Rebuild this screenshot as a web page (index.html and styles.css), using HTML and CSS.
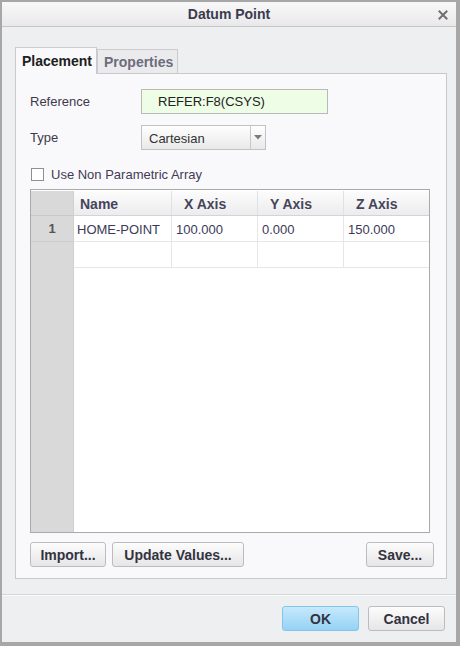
FILE: index.html
```html
<!DOCTYPE html>
<html>
<head>
<meta charset="utf-8">
<link rel="stylesheet" href="styles.css">
</head>
<body>
<div class="window">
  <div class="titlebar">
    <span class="title">Datum Point</span>
    <svg class="close" width="10" height="10" viewBox="0 0 10 10"><path d="M1.5 1.5 L8.5 8.5 M8.5 1.5 L1.5 8.5" stroke="#707070" stroke-width="2" stroke-linecap="square"/></svg>
  </div>
  <div class="body">
    <div class="tabs">
      <div class="tab active">Placement</div>
      <div class="tab">Properties</div>
    </div>
    <div class="panel">
      <div class="row">
        <span class="label">Reference</span>
        <div class="refbox">REFER:F8(CSYS)</div>
      </div>
      <div class="row row-type">
        <span class="label">Type</span>
        <div class="select">
          <span class="select-text">Cartesian</span>
          <span class="select-arrow"><svg width="8" height="5" viewBox="0 0 8 5"><path d="M0 0 H8 L4 4.5 Z" fill="#7b7b7b"/></svg></span>
        </div>
      </div>
      <div class="check-row">
        <span class="checkbox"></span>
        <span class="check-label">Use Non Parametric Array</span>
      </div>
      <div class="table">
        <div class="rowheads">
          <div class="rh rh-head"></div>
          <div class="rh">1</div>
          <div class="rh"></div>
        </div>
        <div class="grid">
          <div class="hrow">
            <div class="hc c-name">Name</div>
            <div class="hc c-x">X Axis</div>
            <div class="hc c-y">Y Axis</div>
            <div class="hc c-z">Z Axis</div>
          </div>
          <div class="drow">
            <div class="dc c-name">HOME-POINT</div>
            <div class="dc c-x">100.000</div>
            <div class="dc c-y">0.000</div>
            <div class="dc c-z">150.000</div>
          </div>
          <div class="drow">
            <div class="dc c-name"></div>
            <div class="dc c-x"></div>
            <div class="dc c-y"></div>
            <div class="dc c-z"></div>
          </div>
        </div>
      </div>
      <div class="btn-row">
        <button class="btn b-import">Import...</button>
        <button class="btn b-update">Update Values...</button>
        <span class="spacer"></span>
        <button class="btn b-save">Save...</button>
      </div>
    </div>
  </div>
  <div class="footer">
    <button class="btn b-ok">OK</button>
    <button class="btn b-cancel">Cancel</button>
  </div>
</div>
</body>
</html>
```
FILE: styles.css
```css
* { box-sizing: border-box; }
html, body { margin: 0; padding: 0; }
body {
  width: 460px;
  height: 646px;
  font-family: "Liberation Sans", Arial, sans-serif;
  font-size: 13px;
  background: #a9a9a9;
}
.window {
  width: 460px;
  height: 646px;
  border-style: solid;
  border-color: #a7a7a7;
  border-width: 2px 4px 4px 2px;
  background: #eeeff1;
  display: flex;
  flex-direction: column;
}
.titlebar {
  height: 25px;
  flex: none;
  border-bottom: 1px solid #c6c6c8;
  background: linear-gradient(#f8f8f8, #e9e9eb);
  display: flex;
  align-items: center;
  justify-content: center;
  position: relative;
}
.title {
  font-weight: bold;
  color: #3b3b4d;
  font-size: 14px;
}
.close {
  position: absolute;
  right: 8px;
  top: 8px;
}
.body {
  flex: 1;
  display: flex;
  flex-direction: column;
  padding: 20px 9px 15px 13px;
  min-height: 0;
}
.tabs {
  display: flex;
  align-items: flex-end;
  height: 26px;
  flex: none;
}
.tab {
  height: 24px;
  padding: 4px 6px 0 6px;
  font-weight: bold;
  color: #6c6c7c;
  background: #ebebed;
  border: 1px solid #cbcbcd;
  border-bottom: none;
  font-size: 14px;
}
.tab.active {
  height: 27px;
  width: 82px;
  padding-top: 5px;
  color: #202020;
  background: #f9f9fb;
  margin-bottom: -1px;
  position: relative;
  z-index: 1;
}
.tab + .tab { width: 81px; padding-left: 6px; }
.panel {
  flex: 1;
  border: 1px solid #c9c9cb;
  background: #f9f9fb;
  display: flex;
  flex-direction: column;
  padding: 15px 16px 11px 14px;
  min-height: 0;
}
.row {
  display: flex;
  align-items: center;
  height: 24px;
}
.row-type { margin-top: 12px; }
.label {
  width: 111px;
  color: #3d3a4a;
}
.refbox {
  width: 187px;
  height: 25px;
  border: 1px solid #b9b9b9;
  background: #eefde5;
  padding: 4px 0 0 16px;
  color: #222;
}
.select {
  width: 125px;
  height: 25px;
  border: 1px solid #c2c2c2;
  background: linear-gradient(#fefefe, #e9e9e9);
  display: flex;
  color: #333;
}
.select-text { flex: 1; padding: 5px 0 0 7px; }
.select-arrow {
  width: 15px;
  border-left: 1px solid #c8c8c8;
  display: flex;
  align-items: center;
  justify-content: center;
}
.check-row {
  display: flex;
  align-items: center;
  height: 16px;
  margin-top: 17px;
}
.checkbox {
  width: 13px;
  height: 13px;
  border: 1px solid #8f8f8f;
  background: #fff;
  margin-left: 1px;
}
.check-label {
  margin-left: 7px;
  color: #443a58;
}
.table {
  flex: 1;
  margin-top: 7px;
  width: 400px;
  border: 1px solid #a9a9a9;
  background: #fff;
  display: flex;
  padding-top: 1px;
  min-height: 0;
}
.rowheads {
  width: 43px;
  background: #d9d9d9;
  border-right: 1px solid #cfcfcf;
}
.rh {
  height: 26px;
  border-bottom: 1px solid #cdcdcd;
  display: flex;
  align-items: center;
  justify-content: center;
  font-weight: bold;
  color: #555;
}
.rh-head { height: 25px; border-bottom: 1px solid #c8c8c8; }
.rh:last-child { border-bottom: 1px solid #d9d9d9; }
.grid { flex: 1; }
.hrow, .drow { display: flex; }
.hrow {
  height: 25px;
  background: linear-gradient(#fcfcfc, #ececee);
  border-bottom: 1px solid #d4d4d6;
}
.drow {
  height: 26px;
  border-bottom: 1px solid #e6e6e8;
}
.c-name { width: 98px; }
.c-x { width: 86px; }
.c-y { width: 86px; }
.c-z { width: 84px; }
.hc {
  font-weight: bold;
  color: #45455a;
  padding: 5px 0 0 12px;
  border-right: 1px solid #e1e1e3;
  font-size: 14px;
}
.hc.c-name { padding-left: 6px; }
.hc.c-z { border-right: none; }
.dc {
  color: #3a3a56;
  padding: 6px 0 0 4px;
  border-right: 1px solid #e6e6e8;
}
.dc.c-name { padding-left: 3px; }
.dc.c-z { border-right: none; }
.btn-row {
  display: flex;
  margin-top: 9px;
  margin-right: -4px;
}
.spacer { flex: 1; }
.btn {
  height: 25px;
  font-family: "Liberation Sans", Arial, sans-serif;
  font-size: 14px;
  font-weight: bold;
  color: #333340;
  border: 1px solid #bcbcbc;
  border-radius: 3px;
  background: linear-gradient(#fcfcfc, #e6e6e8);
  padding: 0;
}
.b-import { width: 76px; }
.b-update { width: 132px; margin-left: 6px; }
.b-save { width: 68px; }
.footer {
  height: 48px;
  flex: none;
  border-top: 1px solid #d6d6d8;
  box-shadow: inset 0 1px 0 #fafafa;
  display: flex;
  justify-content: flex-end;
  align-items: flex-start;
  padding: 11px 11px 0 0;
}
.b-ok {
  width: 77px;
  background: linear-gradient(#c6e9fc, #95d2f6);
  border-color: #86c3ea;
}
.b-cancel { width: 77px; margin-left: 9px; }
```
